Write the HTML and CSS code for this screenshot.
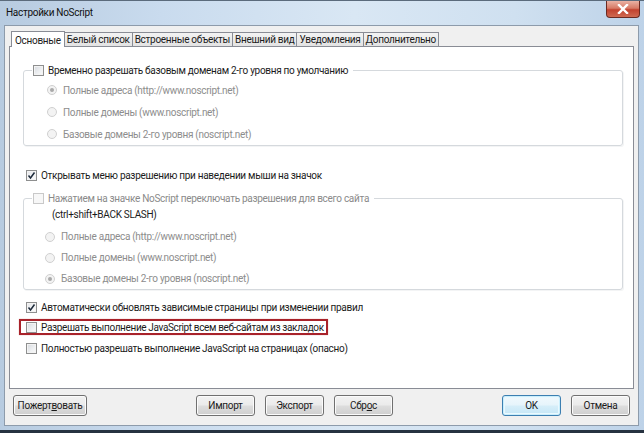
FILE: index.html
```html
<!DOCTYPE html>
<html lang="ru">
<head>
<meta charset="utf-8">
<title>Настройки NoScript</title>
<link rel="stylesheet" href="styles.css">
</head>
<body>
<div class="window">
  <div class="titlebar">
    <span class="title">Настройки NoScript</span>
    <span class="close"><svg width="12" height="10" viewBox="0 0 12 10"><path d="M2 1 L10 9 M10 1 L2 9" stroke="#fff" stroke-width="2.4" stroke-linecap="square"/></svg></span>
  </div>
  <div class="client">
    <div class="tabs">
      <span class="tab active">Основные</span>
      <span class="tab">Белый список</span>
      <span class="tab">Встроенные объекты</span>
      <span class="tab">Внешний вид</span>
      <span class="tab">Уведомления</span>
      <span class="tab">Дополнительно</span>
    </div>
    <div class="panel">
      <fieldset class="group g1">
        <legend class="legend"><span class="cb"></span><span>Временно разрешать базовым доменам 2-го уровня по умолчанию</span></legend>
        <div class="radio-row"><span class="rb on"></span><span>Полные адреса (http://www.noscript.net)</span></div>
        <div class="radio-row"><span class="rb"></span><span>Полные домены (www.noscript.net)</span></div>
        <div class="radio-row"><span class="rb"></span><span>Базовые домены 2-го уровня (noscript.net)</span></div>
      </fieldset>
      <div class="row r-open"><span class="cb checked"><svg width="9" height="9" viewBox="0 0 9 9"><path d="M1.5 4.5 L3.5 7 L7.5 1.5" fill="none" stroke="#1d2a3a" stroke-width="1.5"/></svg></span><span>Открывать меню разрешению при наведении мыши на значок</span></div>
      <fieldset class="group g2">
        <legend class="legend dim"><span class="cb dis"></span><span>Нажатием на значке NoScript переключать разрешения для всего сайта</span></legend>
        <div class="hotkey">(ctrl+shift+BACK SLASH)</div>
        <div class="radio-row r2"><span class="rb"></span><span>Полные адреса (http://www.noscript.net)</span></div>
        <div class="radio-row r2"><span class="rb"></span><span>Полные домены (www.noscript.net)</span></div>
        <div class="radio-row r2"><span class="rb on"></span><span>Базовые домены 2-го уровня (noscript.net)</span></div>
      </fieldset>
      <div class="row r-auto"><span class="cb checked"><svg width="9" height="9" viewBox="0 0 9 9"><path d="M1.5 4.5 L3.5 7 L7.5 1.5" fill="none" stroke="#1d2a3a" stroke-width="1.5"/></svg></span><span>Автоматически обновлять зависимые страницы при изменении правил</span></div>
      <div class="row r-mark"><span class="mark"><span class="cb"></span><span>Разрешать выполнение JavaScript всем веб-сайтам из закладок</span></span></div>
      <div class="row"><span class="cb"></span><span>Полностью разрешать выполнение JavaScript на страницах (опасно)</span></div>
    </div>
    <div class="footer">
      <button class="btn wide">Пожерт<u>в</u>овать</button>
      <div class="mid">
        <button class="btn">Импорт</button>
        <button class="btn">Экспорт</button>
        <button class="btn">Сбр<u>о</u>с</button>
      </div>
      <div class="right">
        <button class="btn ok">OK</button>
        <button class="btn">Отмена</button>
      </div>
    </div>
  </div>
</div>
</body>
</html>
```
FILE: styles.css
```css
* { box-sizing: border-box; }
html, body { margin: 0; padding: 0; }
body {
  width: 644px;
  height: 433px;
  overflow: hidden;
  font-family: Roboto, "Noto Sans", sans-serif;
  font-size: 10px;
  letter-spacing: -0.3px;
  color: #1b1b1b;
  background: #fff;
}
.window {
  width: 644px;
  height: 433px;
  display: flex;
  flex-direction: column;
  background: linear-gradient(90deg, #b7cbe0 0%, #c9dbee 25%, #d9e7f4 55%, #cfe0f0 80%, #bdd2e8 100%);
  border-top: 1px solid #5b6b7c;
  border-bottom: 3px solid #263240;
  padding-bottom: 4px;
}
.titlebar {
  height: 24px;
  flex: none;
  display: flex;
  align-items: flex-start;
  justify-content: space-between;
  padding-left: 6px;
}
.title {
  line-height: 24px;
  color: #111;
}
.close {
  width: 34px;
  height: 17px;
  margin-right: 4px;
  background: linear-gradient(#eab2a4 0%, #d77a66 45%, #c2422f 55%, #cf6a52 100%);
  border: 1px solid #6a2a22;
  border-top: none;
  border-radius: 0 0 4px 4px;
  display: flex;
  align-items: center;
  justify-content: center;
}
.client {
  flex: none;
  height: 401px;
  margin: 0 5px 0 4px;
  background: #f0f0f0;
  border: 1px solid #8d9bab;
  display: flex;
  flex-direction: column;
  padding: 5px 4px 0 4px;
}
.tabs {
  display: flex;
  align-items: flex-end;
  height: 16px;
  margin-bottom: -1px;
  padding-left: 2px;
}
.tab {
  height: 14px;
  margin-bottom: 1px;
  margin-left: -1px;
  padding: 0 2px;
  border: 1px solid #898c95;
  border-bottom: none;
  background: linear-gradient(#f3f3f3, #e3e3e3);
  line-height: 13px;
  white-space: nowrap;
}
.tab.active {
  height: 16px;
  margin-bottom: 0;
  margin-left: 0;
  background: #fff;
  position: relative;
  z-index: 1;
  line-height: 17px;
  padding: 0 3px;
}
.panel {
  height: 343px;
  background: #fff;
  border: 1px solid #898c95;
  display: flex;
  flex-direction: column;
}
.group {
  margin: 0 10px 0 13px;
  padding: 0 0 0 8px;
  border: 1px solid #d5d9dd;
  border-radius: 3px;
  box-shadow: 1px 1px 0 #f3f4f5;
  min-width: 0;
}
.legend {
  display: flex;
  align-items: center;
  height: 14px;
  padding: 0 5px 0 1px;
  white-space: nowrap;
}
.g1 { margin-top: 16px; padding-top: 2px; }
.g2 { margin-top: 6px; }
.dim { color: #8a8a8a; }
.cb {
  width: 11px;
  height: 11px;
  flex: none;
  margin-right: 4px;
  border: 1px solid #8e8f8f;
  background: linear-gradient(135deg, #d6d9de 0%, #eef0f2 60%, #fafafa 100%);
  box-shadow: inset 0 0 0 1px #f3f3f3;
  display: inline-flex;
  align-items: center;
  justify-content: center;
}
.cb.checked { background: linear-gradient(135deg, #e4e6ea, #fdfdfd); }
.cb.dis {
  border-color: #c9c9c9;
  background: #f7f7f7;
  box-shadow: none;
}
.radio-row {
  height: 22px;
  display: flex;
  align-items: center;
  padding-left: 15px;
  color: #8d8d8d;
  white-space: nowrap;
}
.radio-row.r2 { height: 21px; padding-left: 13px; }
.hotkey {
  height: 20px;
  line-height: 20px;
  padding-left: 20px;
  margin-bottom: 1px;
}
.rb {
  width: 10px;
  height: 10px;
  flex: none;
  margin-right: 6px;
  border-radius: 50%;
  border: 1px solid #d0d0d0;
  background: #f3f3f3;
  display: inline-flex;
  align-items: center;
  justify-content: center;
}
.rb.on::after {
  content: "";
  width: 4px;
  height: 4px;
  border-radius: 50%;
  background: #a9a9a9;
}
.row {
  height: 20px;
  display: flex;
  align-items: center;
  padding-left: 16px;
  white-space: nowrap;
}
.r-open { margin-top: 19px; }
.r-auto { margin-top: 7px; }
.r-mark { padding-left: 9px; }
.mark {
  width: 309px;
  height: 16px;
  display: flex;
  align-items: center;
  padding-left: 5px;
  letter-spacing: -0.36px;
  border: 2px solid #a8222a;
  box-shadow: 0 0 1px #d99;
}
.row:last-child { margin-top: 1px; }
.footer {
  display: flex;
  align-items: center;
  margin-top: 6px;
  padding: 0 4px 0 4px;
}
.mid { display: flex; gap: 10px; margin-left: 109px; }
.right { display: flex; gap: 10px; margin-left: auto; }
.btn {
  width: 59px;
  height: 21px;
  padding: 0;
  font: inherit;
  letter-spacing: inherit;
  color: #1b1b1b;
  border: 1px solid #707070;
  border-radius: 3px;
  background: linear-gradient(#f2f2f2 0%, #ebebeb 48%, #dddddd 52%, #cfcfcf 100%);
  box-shadow: inset 0 0 0 1px #fbfbfb;
}
.btn.wide { width: 74px; }
.btn.ok {
  border-color: #3c7fb1;
  background: linear-gradient(#f1f9fd 0%, #e6f4fb 48%, #d6eef9 52%, #c4e6f6 100%);
  box-shadow: inset 0 0 0 1px #c9eefc, inset 0 0 0 2px #e9f8fe;
}
```
